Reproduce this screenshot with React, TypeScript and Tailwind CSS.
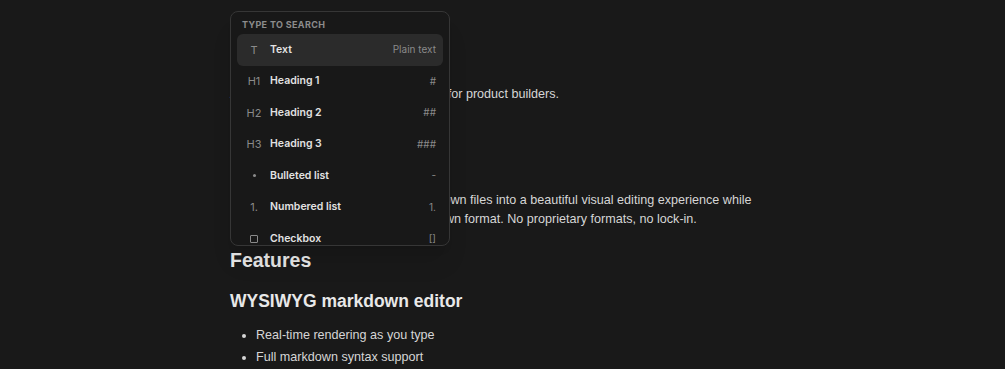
import React from "react";

interface SlashItem {
  icon: string;
  label: string;
  hint: string;
}

const items: SlashItem[] = [
  { icon: "T", label: "Text", hint: "Plain text" },
  { icon: "H1", label: "Heading 1", hint: "#" },
  { icon: "H2", label: "Heading 2", hint: "##" },
  { icon: "H3", label: "Heading 3", hint: "###" },
  { icon: "dot", label: "Bulleted list", hint: "-" },
  { icon: "1.", label: "Numbered list", hint: "1." },
  { icon: "box", label: "Checkbox", hint: "[]" },
];

const ItemIcon: React.FC<{ icon: string }> = ({ icon }) => {
  if (icon === "dot")
    return <span className="inline-block w-[3px] h-[3px] rounded-full bg-[#8a8a8a]" />;
  if (icon === "box")
    return <span className="inline-block w-[8px] h-[8px] border border-[#8a8a8a] rounded-[1px]" />;
  return <>{icon}</>;
};

const SlashMenu: React.FC = () => {
  return (
    <div className="absolute left-0 top-[11px] w-[220px] h-[235px] overflow-hidden rounded-lg border border-[#363636] bg-[#181818] shadow-xl font-['Inter',sans-serif]">
      <div className="px-[11px] pt-[7px] h-[22px] text-[9px] leading-[12px] font-bold tracking-[0.04em] text-[#8c8c8c]">
        TYPE TO SEARCH
      </div>
      <div className="px-[6px]">
        {items.map((item, i) => (
          <div
            key={item.label}
            className={
              "flex items-center h-[31.5px] rounded-md pl-[8px] pr-[7px] " +
              (i === 0 ? "bg-[#2b2b2b]" : "")
            }
          >
            <span className="w-[18px] flex items-center justify-center text-[11px] text-[#8a8a8a]">
              <ItemIcon icon={item.icon} />
            </span>
            <span className="ml-[7px] flex-1 text-[10.5px] font-semibold text-[#e2e2e2]">
              {item.label}
            </span>
            <span className="text-[10px] text-[#8a8a8a]">{item.hint}</span>
          </div>
        ))}
      </div>
    </div>
  );
};

export default function App() {
  return (
    <div className="h-[369px] overflow-hidden bg-[#191919] text-[#d6d6d6] font-['Liberation_Sans',Arial,sans-serif]">
      <div className="relative w-[545px] mx-auto">
        <h1 className="pt-[28px] text-[26px] leading-[32px] font-bold text-[#e8e8e8]">
          Ekos
        </h1>
        <p className="mt-[25px] text-[12.6px] leading-[19px]">
          A clean minimal markdown editor, built for product builders.
        </p>
        <h2 className="mt-[46px] text-[20px] leading-[26px] font-bold text-[#e8e8e8]">
          Overview
        </h2>
        <p className="mt-[15px] text-[12.6px] leading-[19px]">
          Ekos quickly turns all your local markdown files into a beautiful visual editing experience while
          <br />
          keeping them in their standard markdown format. No proprietary formats, no lock-in.
        </p>
        <h2 className="mt-[17px] text-[19.5px] leading-[28px] font-bold text-[#e8e8e8]">
          Features
        </h2>
        <h3 className="mt-[15px] text-[17.5px] leading-[24px] font-bold text-[#e8e8e8]">
          WYSIWYG markdown editor
        </h3>
        <ul className="mt-[11px] pl-[26px] list-disc text-[12.6px] leading-[22px]">
          <li>Real-time rendering as you type</li>
          <li>Full markdown syntax support</li>
        </ul>
        <SlashMenu />
      </div>
    </div>
  );
}
